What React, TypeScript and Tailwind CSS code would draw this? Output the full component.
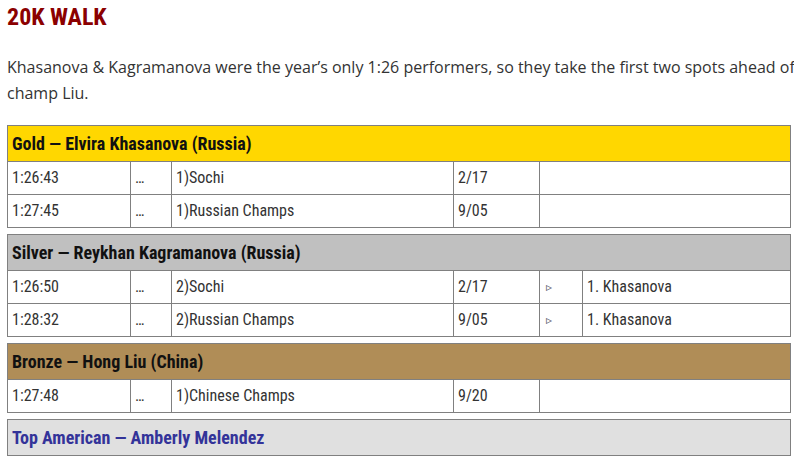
import React from 'react';

type Row = { mark: string; time: string; meet: string; date: string; note?: string; vs?: string };
type Section = { title: string; head: string; text: string; rows: Row[]; vs?: boolean };

const sections: Section[] = [
  {
    title: 'Gold — Elvira Khasanova (Russia)',
    head: 'bg-[#ffd700]',
    text: 'text-[#111]',
    rows: [
      { mark: '1:26:43', time: '…', meet: '1)Sochi', date: '2/17' },
      { mark: '1:27:45', time: '…', meet: '1)Russian Champs', date: '9/05' },
    ],
  },
  {
    title: 'Silver — Reykhan Kagramanova (Russia)',
    head: 'bg-[#c0c0c0]',
    text: 'text-[#111]',
    vs: true,
    rows: [
      { mark: '1:26:50', time: '…', meet: '2)Sochi', date: '2/17', note: '▹', vs: '1. Khasanova' },
      { mark: '1:28:32', time: '…', meet: '2)Russian Champs', date: '9/05', note: '▹', vs: '1. Khasanova' },
    ],
  },
  {
    title: 'Bronze — Hong Liu (China)',
    head: 'bg-[#b08d57]',
    text: 'text-[#111]',
    rows: [{ mark: '1:27:48', time: '…', meet: '1)Chinese Champs', date: '9/20' }],
  },
  {
    title: 'Top American — Amberly Melendez',
    head: 'bg-[#e0e0e0]',
    text: 'text-[#333399]',
    rows: [],
  },
];

const cell = 'border border-[#808080] px-[4px] h-[33px] align-middle';

function MedalTable({ s }: { s: Section }) {
  const cols = s.vs ? 6 : 5;
  return (
    <table className="w-full table-fixed border-collapse mb-[6px] text-[#333] [font-family:Roboto,sans-serif] text-[16px] [font-stretch:75%]">
      <colgroup>
        <col className="w-[123px]" />
        <col className="w-[41px]" />
        <col className="w-[282px]" />
        <col className="w-[86px]" />
        {s.vs && <col className="w-[43px]" />}
        <col />
      </colgroup>
      <tbody>
        <tr>
          <td colSpan={cols} className={`border border-[#808080] px-[4px] h-[36px] font-bold text-[18px] ${s.head} ${s.text}`}>
            {s.title}
          </td>
        </tr>
        {s.rows.map((r, i) => (
          <tr key={i}>
            <td className={cell}>{r.mark}</td>
            <td className={cell}>{r.time}</td>
            <td className={cell}>{r.meet}</td>
            <td className={cell}>{r.date}</td>
            {s.vs && <td className={`${cell} pl-[6px] text-[12px] text-[#556]`}>{r.note}</td>}
            <td className={cell}>{r.vs}</td>
          </tr>
        ))}
      </tbody>
    </table>
  );
}

export default function App() {
  return (
    <div className="bg-white w-[794px] h-[460px] overflow-hidden pl-[7px]">
      <h2 className="pt-[1px] text-[24px] leading-[32px] font-bold text-[#8b0000] [font-family:Roboto,sans-serif] [font-stretch:75%]">
        20K WALK
      </h2>
      <p className="w-[792px] mt-[21px] mb-[19px] text-[16px] leading-[26px] text-[#333] [font-family:'Open_Sans',sans-serif]">
        Khasanova &amp; Kagramanova were the year’s only 1:26 performers, so they take the first two spots ahead of champ Liu.
      </p>
      <div className="w-[784px]">
        {sections.map((s) => (
          <MedalTable key={s.title} s={s} />
        ))}
      </div>
    </div>
  );
}
